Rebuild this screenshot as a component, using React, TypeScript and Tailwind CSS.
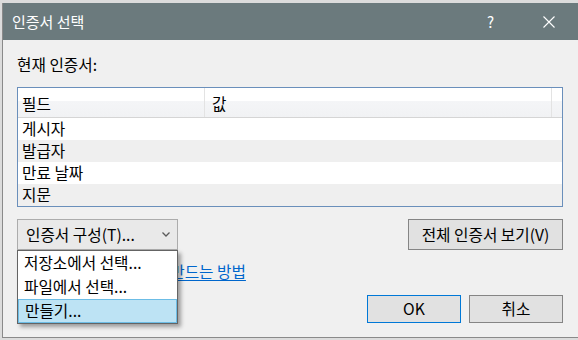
import React from 'react';

const rows = ['게시자', '발급자', '만료 날짜', '지문'];

const menuItems = ['저장소에서 선택...', '파일에서 선택...', '만들기...'];

const App = () => {
  return (
    <div className="w-[578px] h-[340px] overflow-hidden bg-[#dcdcdc] pt-[3px] pl-[2px] font-['Noto_Sans_CJK_KR','Noto_Sans',sans-serif] text-[#000]">
      <div className="flex h-[335px] flex-col border-b border-l border-[#8a8a8a] bg-[#f0f0f0]">
        {/* title bar */}
        <div className="flex h-[37px] shrink-0 items-center bg-[#6b7a7d] pl-[9px] text-white">
          <span className="text-[15px] leading-none">인증서 선택</span>
          <span className="ml-auto mr-[49px] text-[15px] leading-none">?</span>
          <svg width="12" height="12" viewBox="0 0 12 12" className="mr-[23px]">
            <path d="M0.5 0.5 L11.5 11.5 M11.5 0.5 L0.5 11.5" stroke="white" strokeWidth="1.1" />
          </svg>
        </div>

        {/* body */}
        <div className="relative flex-1 px-[14px] text-[15.7px]">
          <div className="pt-[15px] leading-[20px]">현재 인증서:</div>

          <div className="mt-[12px] w-[546px] border border-[#6a8fbb] bg-white">
            <div className="flex h-[30px] border-b border-[#d5d5d5] bg-[linear-gradient(#ffffff_0%,#ffffff_45%,#f4f5f7_46%,#f1f2f4_100%)]">
              <div className="flex w-[187px] items-center border-r border-[#e3e3e3] pl-[4px] pt-[2px]">필드</div>
              <div className="flex w-[347px] items-center border-r border-[#e3e3e3] pl-[7px] pt-[2px]">값</div>
              <div className="flex-1" />
            </div>
            {rows.map((r, i) => (
              <div
                key={r}
                className={`flex h-[22px] items-center pl-[4px] leading-none ${i % 2 === 1 ? 'bg-[#efefef]' : 'bg-white'}`}
              >
                {r}
              </div>
            ))}
          </div>

          <div className="mt-[12px] flex w-[546px] justify-between">
            <div className="flex h-[31px] w-[161px] items-center border border-[#acacac] bg-[#e9e9e9] pl-[8px] pr-[7px]">
              <span>인증서 구성(T)...</span>
              <svg width="8" height="5" viewBox="0 0 8 5" className="ml-auto">
                <path d="M0.5 0.5 L4 4 L7.5 0.5" fill="none" stroke="#5a5a5a" strokeWidth="1.3" />
              </svg>
            </div>
            <button className="flex h-[31px] w-[155px] items-center justify-center border border-[#858585] bg-[#e1e1e1]">
              전체 인증서 보기(V)
            </button>
          </div>

          <div className="mt-[12px] pl-[92px] leading-[20px]">
            <a className="text-[#0066cc] underline underline-offset-2">인증서를 만드는 방법</a>
          </div>

          <div className="mt-[13px] flex w-[546px] justify-end gap-[8px]">
            <button className="flex h-[28px] w-[94px] items-center justify-center border border-[#0078d7] bg-[#e1e1e1]">
              OK
            </button>
            <button className="flex h-[28px] w-[94px] items-center justify-center border border-[#858585] bg-[#e1e1e1]">
              취소
            </button>
          </div>

          {/* open dropdown menu */}
          <div className="absolute left-[14px] top-[210px] w-[161px] border border-[#646464] bg-white shadow-[3px_3px_4px_rgba(0,0,0,0.35)]">
            {menuItems.map((m, i) => (
              <div
                key={m}
                className={`flex h-[24px] items-center pl-[6px] ${i === 2 ? 'border border-[#6cbde6] bg-[#bde3f4] pl-[5px]' : ''}`}
              >
                {m}
              </div>
            ))}
          </div>
        </div>
      </div>
    </div>
  );
};

export default App;
